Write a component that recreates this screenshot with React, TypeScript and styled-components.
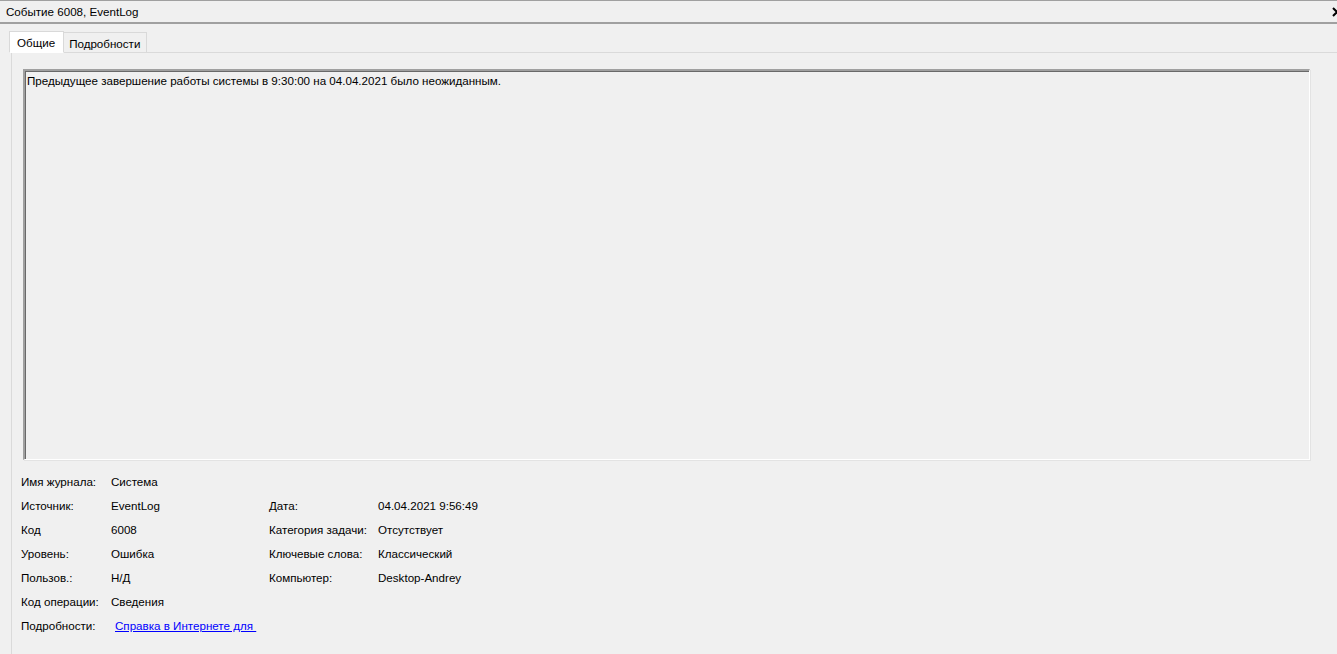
import styled, { createGlobalStyle } from "styled-components";

const GlobalStyle = createGlobalStyle`
  html, body {
    margin: 0;
    padding: 0;
    background: #f0f0f0;
    overflow: hidden;
  }
  body {
    font-family: "Liberation Sans", "Noto Sans", Arial, sans-serif;
    font-size: 11.6px;
    color: #000;
  }
`;

const Window = styled.div`
  width: 1337px;
  height: 654px;
  display: flex;
  flex-direction: column;
  background: #f0f0f0;
  overflow: hidden;
`;

const TitleBar = styled.div`
  height: 21px;
  border-top: 1px solid #a0a0a0;
  border-bottom: 2px solid #a0a0a0;
  display: flex;
  align-items: center;
  padding-left: 6px;
  position: relative;
`;

const CloseIcon = styled.svg`
  position: absolute;
  right: -5px;
  top: 6px;
`;

const Body = styled.div`
  flex: 1;
  display: flex;
  flex-direction: column;
  padding: 7px 0 0 9px;
`;

const TabStrip = styled.div`
  display: flex;
  align-items: flex-end;
  height: 21px;
  border-bottom: 1px solid #dadada;
  margin-left: 2px;
  position: relative;
  z-index: 1;
`;

const Tab = styled.div<{ $active?: boolean }>`
  height: ${(p) => (p.$active ? "22px" : "20px")};
  padding: 0 ${(p) => (p.$active ? "8px" : "6px")} 0 ${(p) => (p.$active ? "7px" : "5px")};
  margin-left: ${(p) => (p.$active ? "-2px" : "0")};
  margin-bottom: ${(p) => (p.$active ? "-1px" : "0")};
  display: flex;
  align-items: center;
  box-sizing: border-box;
  background: ${(p) => (p.$active ? "#ffffff" : "#f0f0f0")};
  border: 1px solid #d9d9d9;
  border-bottom: ${(p) => (p.$active ? "1px solid #ffffff" : "none")};
  border-left: ${(p) => (p.$active ? "1px solid #d9d9d9" : "none")};
  padding-top: ${(p) => (p.$active ? "0" : "2px")};
`;

const Panel = styled.div`
  flex: 1;
  margin-left: 2px;
  border-left: 1px solid #dadada;
  padding: 16px 27px 0 11px;
  display: flex;
  flex-direction: column;
`;

const MessageBox = styled.div`
  box-sizing: border-box;
  height: 391px;
  border-top: 2px solid #a0a0a0;
  border-left: 2px solid #a0a0a0;
  border-right: 1px solid #ffffff;
  border-bottom: 1px solid #ffffff;
  box-shadow: inset 1px 1px 0 #696969, 1px 1px 0 #e3e3e3;
  padding: 3px 2px;
`;

const Fields = styled.div`
  margin-top: 9px;
  margin-left: -2px;
  display: grid;
  grid-template-columns: 90px 158px 109px auto;
  grid-auto-rows: 24px;
  align-items: center;
`;

const Label = styled.div<{ $col?: number }>`
  grid-column: ${(p) => p.$col ?? 1};
`;

const Value = styled.div<{ $col?: number }>`
  grid-column: ${(p) => p.$col ?? 2};
`;

const Link = styled.a`
  color: #0000ff;
  text-decoration: underline;
  margin-left: 4px;
  white-space: pre;
  cursor: pointer;
`;

export default function App() {
  return (
    <>
      <GlobalStyle />
      <Window>
        <TitleBar>
          Событие 6008, EventLog
          <CloseIcon width="10" height="10" viewBox="0 0 10 10">
            <path d="M1 1 L9 9 M9 1 L1 9" stroke="#000" strokeWidth="2" />
          </CloseIcon>
        </TitleBar>
        <Body>
          <TabStrip>
            <Tab $active>Общие</Tab>
            <Tab>Подробности</Tab>
          </TabStrip>
          <Panel>
            <MessageBox>
              Предыдущее завершение работы системы в 9:30:00 на 04.04.2021 было неожиданным.
            </MessageBox>
            <Fields>
              <Label>Имя журнала:</Label>
              <Value>Система</Value>

              <Label>Источник:</Label>
              <Value>EventLog</Value>
              <Label $col={3}>Дата:</Label>
              <Value $col={4}>04.04.2021 9:56:49</Value>

              <Label>Код</Label>
              <Value>6008</Value>
              <Label $col={3}>Категория задачи:</Label>
              <Value $col={4}>Отсутствует</Value>

              <Label>Уровень:</Label>
              <Value>Ошибка</Value>
              <Label $col={3}>Ключевые слова:</Label>
              <Value $col={4}>Классический</Value>

              <Label>Пользов.:</Label>
              <Value>Н/Д</Value>
              <Label $col={3}>Компьютер:</Label>
              <Value $col={4}>Desktop-Andrey</Value>

              <Label>Код операции:</Label>
              <Value>Сведения</Value>

              <Label>Подробности:</Label>
              <Value>
                <Link>Справка в Интернете для </Link>
              </Value>
            </Fields>
          </Panel>
        </Body>
      </Window>
    </>
  );
}
